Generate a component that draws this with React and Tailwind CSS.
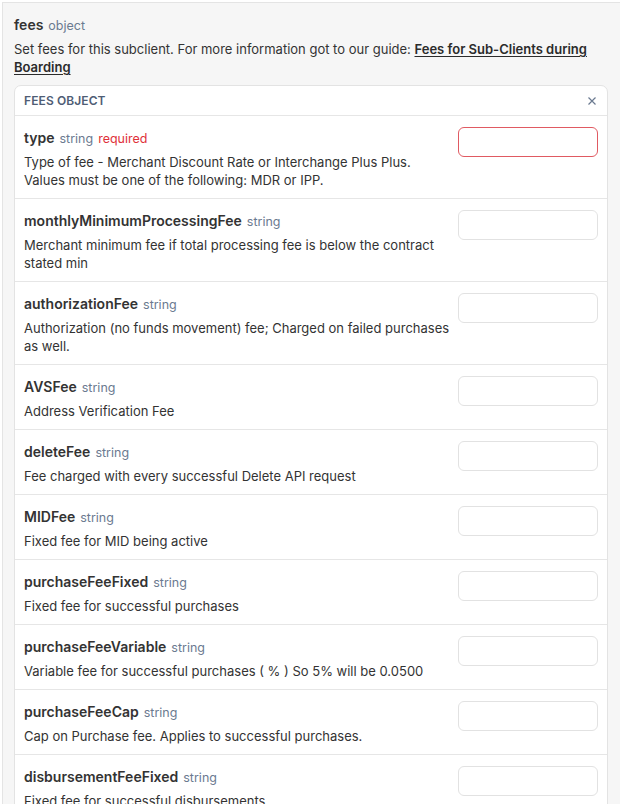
import React from "react";

const rows = [
  { name: "type", required: true, desc: ["Type of fee - Merchant Discount Rate or Interchange Plus Plus.", "Values must be one of the following: MDR or IPP."] },
  { name: "monthlyMinimumProcessingFee", desc: ["Merchant minimum fee if total processing fee is below the contract stated min"] },
  { name: "authorizationFee", desc: ["Authorization (no funds movement) fee; Charged on failed purchases as well."] },
  { name: "AVSFee", desc: ["Address Verification Fee"] },
  { name: "deleteFee", desc: ["Fee charged with every successful Delete API request"] },
  { name: "MIDFee", desc: ["Fixed fee for MID being active"] },
  { name: "purchaseFeeFixed", desc: ["Fixed fee for successful purchases"] },
  { name: "purchaseFeeVariable", desc: ["Variable fee for successful purchases ( % ) So 5% will be 0.0500"] },
  { name: "purchaseFeeCap", desc: ["Cap on Purchase fee. Applies to successful purchases."] },
  { name: "disbursementFeeFixed", desc: ["Fixed fee for successful disbursements"] },
];

export default function App() {
  return (
    <div className="h-[804px] overflow-hidden bg-white" style={{ fontFamily: "Inter, 'Noto Sans', sans-serif" }}>
      <div className="ml-[2px] mt-[2px] h-[900px] border-l border-t border-[#e4e4e4] bg-[#f6f6f6] pl-[11px] pr-[10px] pt-[12px] text-[#2d2d2d]">
        <div className="flex items-baseline gap-[5px] leading-[20px]">
          <span className="text-[14px] font-semibold text-[#333]">fees</span>
          <span className="text-[12.5px] text-[#6b7a90]">object</span>
        </div>
        <p className="mt-[4px] text-[13px] leading-[18px] text-[#333]">
          Set fees for this subclient. For more information got to our guide:{" "}
          <a className="font-semibold text-[#2b2b2b] underline underline-offset-2">Fees for Sub-Clients during Boarding</a>
        </p>
        <div className="mt-[9px] w-[594px] overflow-hidden rounded-[7px] border border-[#e3e3e3] bg-white">
          <div className="flex h-[30px] items-center justify-between border-b border-[#e6e6e6] pl-[9px] pr-[11px]">
            <span className="text-[12px] font-semibold uppercase tracking-[0.1px] text-[#4f5d75]">Fees Object</span>
            <svg width="8" height="8" viewBox="0 0 8 8" className="text-[#6b7a90]">
              <path d="M0.5 0.5 L7.5 7.5 M7.5 0.5 L0.5 7.5" stroke="currentColor" strokeWidth="1.2" />
            </svg>
          </div>
          {rows.map((r) => (
            <div key={r.name} className="flex border-b border-[#e6e6e6] pb-[9px] pl-[9px] pr-[9px] pt-[11px]">
              <div className="min-w-0 flex-1 pr-[6px]">
                <div className="flex items-baseline gap-[5px] leading-[22px]">
                  <span className="text-[14px] font-semibold text-[#333]">{r.name}</span>
                  <span className="text-[12.5px] text-[#6b7a90]">string</span>
                  {r.required && <span className="text-[12.5px] text-[#e0313a]">required</span>}
                </div>
                <div className="mt-[3px] text-[13px] leading-[18px] text-[#333]">
                  {r.desc.map((d, i) => (
                    <div key={i}>{d}</div>
                  ))}
                </div>
              </div>
              <div
                className={
                  "h-[30px] w-[140px] shrink-0 rounded-[6px] border bg-white " +
                  (r.required ? "border-[#e05a62]" : "border-[#e2e2e2]")
                }
              />
            </div>
          ))}
        </div>
      </div>
    </div>
  );
}
